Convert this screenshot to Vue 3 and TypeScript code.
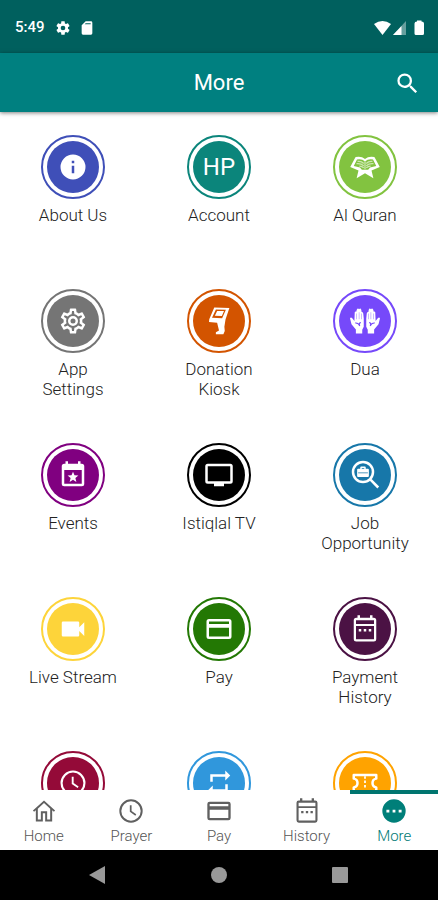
<script setup lang="ts">
import { ref } from 'vue'

interface Glyph {
  fill?: string
  stroke?: string
  fine?: string
}

interface Tile {
  label?: string
  color: string
  icon?: string
  initials?: string
}

interface Tab {
  id: string
  label: string
  icon: string
}

const COG_BODY =
  'M10,22C9.75,22 9.54,21.82 9.5,21.58L9.13,18.93C8.5,18.68 7.96,18.34 7.44,17.94L4.95,18.95C4.73,19.03 4.46,18.95 4.34,18.73L2.34,15.27C2.21,15.05 2.27,14.78 2.46,14.63L4.57,12.97L4.5,12L4.57,11L2.46,9.37C2.27,9.22 2.21,8.95 2.34,8.73L4.34,5.27C4.46,5.05 4.73,4.96 4.95,5.05L7.44,6.05C7.96,5.66 8.5,5.32 9.13,5.07L9.5,2.42C9.54,2.18 9.75,2 10,2H14C14.25,2 14.46,2.18 14.5,2.42L14.87,5.07C15.5,5.32 16.04,5.66 16.56,6.05L19.05,5.05C19.27,4.96 19.54,5.05 19.66,5.27L21.66,8.73C21.79,8.95 21.73,9.22 21.54,9.37L19.43,11L19.5,12L19.43,13L21.54,14.63C21.73,14.78 21.79,15.05 21.66,15.27L19.66,18.73C19.54,18.95 19.27,19.04 19.05,18.95L16.56,17.95C16.04,18.34 15.5,18.68 14.87,18.93L14.5,21.58C14.46,21.82 14.25,22 14,22Z'
const COG_INNER =
  'M11.25,4L10.88,6.61C9.68,6.86 8.62,7.5 7.85,8.39L5.44,7.35L4.69,8.65L6.8,10.2C6.4,11.37 6.4,12.64 6.8,13.8L4.68,15.36L5.43,16.66L7.86,15.62C8.63,16.5 9.68,17.14 10.87,17.38L11.24,20H12.76L13.13,17.39C14.32,17.14 15.37,16.5 16.14,15.62L18.57,16.66L19.32,15.36L17.2,13.81C17.6,12.64 17.6,11.37 17.2,10.2L19.31,8.65L18.56,7.35L16.15,8.39C15.38,7.5 14.32,6.86 13.12,6.62L12.75,4Z'

const glyphs: Record<string, Glyph> = {
  cog: { fill: COG_BODY + 'M12,8.5A3.5,3.5 0 0,0 12,15.5A3.5,3.5 0 0,0 12,8.5Z' },
  cogOutline: {
    fill: COG_BODY + COG_INNER + 'M12,8A4,4 0 0,1 12,16A4,4 0 0,1 12,8ZM12,10A2,2 0 0,0 12,14A2,2 0 0,0 12,10Z'
  },
  sdCard: { fill: 'M18 2H10L4 8V20A2 2 0 0 0 6 22H18A2 2 0 0 0 20 20V4A2 2 0 0 0 18 2ZM10 5H17.500V6.500H8.500Z' },
  search: {
    fill: 'M9.5,3A6.5,6.5 0 0,1 16,9.5C16,11.11 15.41,12.59 14.44,13.73L14.71,14H15.5L20.5,19L19,20.5L14,15.5V14.71L13.73,14.44C12.59,15.41 11.11,16 9.5,16A6.5,6.5 0 0,1 9.500,3ZM9.500,5A4.5,4.5 0 0,0 9.5,14A4.5,4.5 0 0,0 9.5,5Z'
  },
  info: { fill: 'M12,2A10,10 0 1,0 12,22A10,10 0 1,0 12,2ZM11,7H13V9H11ZM11,11H13V17H11Z' },
  quran: {
    fill: 'M4.500 4Q9 3 12 5.500Q15 3 19.500 4L20.200 5.200L23.800 12L17.200 14.800L18.700 21L12 17L5.300 21L6.800 14.800L.200 12L3.800 5.200ZM5.600 6L3 11.200L8 12.300L9.500 14.200H14.500L16 12.300L21 11.200L18.400 6Q14.500 5.300 12 7.500Q9.500 5.300 5.600 6Z',
    fine: 'M12 7.500V13.800M6 7.500Q9 7 11 9.200M5.200 9.300Q8.500 8.800 11 11M7.500 11.200Q9.500 11.200 11 12.600M18 7.500Q15 7 13 9.200M18.800 9.300Q15.500 8.800 13 11M16.500 11.200Q14.500 11.200 13 12.600'
  },
  kiosk: {
    fill: 'M8.200 1.200L20.300 1.500L17.200 10.700L16.300 16.500L16.600 20L15.500 22.500H9.500V21L12 19.500L10.500 13.400L4 12.700L4.200 10.500ZM9.500 2.700L6.400 9.300L14.500 9.800L17.500 2.900ZM10.500 3.900H16L14.300 7.900L8.700 7.700Z'
  },
  hands: {
    fill: 'M11 10V16.500L9.800 19V22H4.700V18.800L1.200 14.500L0 9.800Q.700 8.600 1.800 9.800L3.500 12L3.800 5Q4.300 4 5 4.600L5.400 3Q6.300 1.200 7.200 2.600Q8.400 1.300 9 3L9.300 4.800Q10.400 4.500 10.600 6ZM13 10V16.500L14.200 19V22H19.300V18.800L22.800 14.500L24 9.800Q23.300 8.600 22.200 9.800L20.500 12L20.200 5Q19.700 4 19 4.600L18.600 3Q17.700 1.200 16.800 2.600Q15.600 1.300 15 3L14.700 4.800Q13.600 4.500 13.400 6ZM4 13.200L4.300 14Q6.500 13.800 7.500 16.200L8.200 15.700Q7.200 14.200 8.800 13.300L8.500 12.700Q7.300 13 6.900 13.900Q5.800 13 4 13.200ZM20 13.200L19.700 14Q17.500 13.800 16.500 16.200L15.800 15.700Q16.800 14.200 15.200 13.300L15.500 12.700Q16.700 13 17.100 13.900Q18.200 13 20 13.200ZM5.300 6H5.600V10.500H5.300ZM7.100 5H7.400V10.500H7.100ZM9 6H9.300V10.500H9ZM18.400 6H18.700V10.500H18.400ZM16.600 5H16.900V10.500H16.600ZM14.700 6H15V10.500H14.700Z'
  },
  calendarStar: {
    fill: 'M6 1H8V3H16V1H18V3H19A2 2 0 0 1 21 5V19A2 2 0 0 1 19 21H5A2 2 0 0 1 3 19V5A2 2 0 0 1 5 3H6ZM5 8V19H19V8ZM12 9.300L13.200 12.200L16.300 12.400L13.900 14.400L14.700 17.500L12 15.800L9.300 17.500L10.100 14.400L7.700 12.400L10.800 12.200Z'
  },
  tv: {
    fill: 'M3 3H21A2 2 0 0 1 23 5V17A2 2 0 0 1 21 19H16V21H8V19H3A2 2 0 0 1 1 17V5A2 2 0 0 1 3 3ZM3 5V17H21V5Z'
  },
  jobSearch: {
    fill: 'M6.500 7H8.200V6Q8.200 5.200 9 5.200H11.800Q12.600 5.200 12.600 6V7H14.300Q15.100 7 15.100 7.800V12.700Q15.100 13.500 14.300 13.500H6.500Q5.700 13.500 5.700 12.700V7.800Q5.700 7 6.500 7ZM9.400 6.300V7H11.400V6.300ZM6.500 10V10.500H14.300V10Z',
    stroke: 'M10.400 1.600A8 8 0 1 1 10.400 17.600A8 8 0 1 1 10.400 1.600ZM16.200 15.500L22.600 22'
  },
  video: { fill: 'M17,10.5V7A1,1 0 0,0 16,6H4A1,1 0 0,0 3,7V17A1,1 0 0,0 4,18H16A1,1 0 0,0 17,17V13.5L21,17.5V6.5L17,10.5Z' },
  card: {
    fill: 'M4 4H20A2 2 0 0 1 22 6V18A2 2 0 0 1 20 20H4A2 2 0 0 1 2 18V6A2 2 0 0 1 4 4ZM4 6V8H20V6ZM4 11V18H20V11Z'
  },
  calendar: {
    fill: 'M6 1H8V3H16V1H18V3H19A2 2 0 0 1 21 5V20A2 2 0 0 1 19 22H5A2 2 0 0 1 3 20V5A2 2 0 0 1 5 3H6ZM4.800 5V8H19.200V5ZM4.800 9.500V20.200H19.200V9.500ZM7 12H9V14H7ZM11 12H13V14H11ZM15 12H17V14H15Z'
  },
  clock: {
    fill: 'M12 2A10 10 0 1 0 12 22A10 10 0 1 0 12 2ZM12 3.700A8.300 8.300 0 1 1 12 20.300A8.300 8.300 0 1 1 12 3.700ZM11 7H12.500V12L16.500 14.800L15.700 16L11 12.700Z'
  },
  repeat: { fill: 'M17,17H7V14L3,18L7,22V19H19V13H17ZM7,7H17V10L21,6L17,2V5H5V11H7Z' },
  ticket: {
    fill: 'M11.300 6.500H12.700V8.500H11.300ZM11.300 10H12.700V12H11.300ZM11.300 13.500H12.700V15.500H11.300Z',
    stroke: 'M3 5.500H21V8.500Q18 9 18 12Q18 15 21 15.500V18.500H3V15.500Q6 15 6 12Q6 9 3 8.500Z'
  },
  home: { fill: 'M12 3L2.500 11.600L3.500 12.700L5 11.300V21H11V14H13V21H19V11.300L20.500 12.700L21.500 11.600ZM12 5.200L17.300 10V19.300H14.700V12.300H9.300V19.300H6.700V10Z' },
  more: { fill: 'M12 2A10 10 0 1 0 12 22A10 10 0 1 0 12 2ZM5.500 11H8V13.200H5.500ZM10.800 11H13.200V13.200H10.800ZM16 11H18.500V13.200H16Z' }
}

const tiles: Tile[] = [
  { label: 'About Us', color: '#3f4fb8', icon: 'info' },
  { label: 'Account', color: '#0b857b', initials: 'HP' },
  { label: 'Al Quran', color: '#82c340', icon: 'quran' },
  { label: 'App Settings', color: '#757575', icon: 'cogOutline' },
  { label: 'Donation Kiosk', color: '#d35400', icon: 'kiosk' },
  { label: 'Dua', color: '#7649fa', icon: 'hands' },
  { label: 'Events', color: '#800080', icon: 'calendarStar' },
  { label: 'Istiqlal TV', color: '#000000', icon: 'tv' },
  { label: 'Job Opportunity', color: '#1777a9', icon: 'jobSearch' },
  { label: 'Live Stream', color: '#fdd43a', icon: 'video' },
  { label: 'Pay', color: '#237804', icon: 'card' },
  { label: 'Payment History', color: '#4b1244', icon: 'calendar' },
  { color: '#940a38', icon: 'clock' },
  { color: '#3097dc', icon: 'repeat' },
  { color: '#ffa300', icon: 'ticket' }
]

const tabs: Tab[] = [
  { id: 'home', label: 'Home', icon: 'home' },
  { id: 'prayer', label: 'Prayer', icon: 'clock' },
  { id: 'pay', label: 'Pay', icon: 'card' },
  { id: 'history', label: 'History', icon: 'calendar' },
  { id: 'more', label: 'More', icon: 'more' }
]

const activeTab = ref('more')
</script>

<template>
  <div class="app">
    <div class="status">
      <div class="status-group">
        <span class="time">5:49</span>
        <svg class="status-icon" viewBox="0 0 24 24"><path :d="glyphs.cog.fill" /></svg>
        <svg class="status-icon" viewBox="0 0 24 24"><path :d="glyphs.sdCard.fill" /></svg>
      </div>
      <svg class="signals" viewBox="0 0 52 16">
        <path d="M0 4Q8.500-2 17 4L8.500 15Z" />
        <path d="M32 1V15H19Z" opacity="0.4" />
        <path d="M27.500 6V15H19Z" />
        <path d="M43 1.500V0.500H47.500V1.500Q50 1.500 50 3.500V13.500Q50 15 48.500 15H42Q40.500 15 40.500 13.500V3.500Q40.500 1.500 43 1.500Z" />
      </svg>
    </div>

    <header class="bar">
      <h1 class="title">More</h1>
      <button class="search" type="button" aria-label="Search">
        <svg viewBox="0 0 24 24"><path :d="glyphs.search.fill" /></svg>
      </button>
    </header>

    <main class="content">
      <div class="grid">
        <button v-for="tile in tiles" :key="tile.color" class="tile" type="button">
          <span class="badge" :style="{ color: tile.color }">
            <span class="disc">
              <span v-if="tile.initials" class="initials">{{ tile.initials }}</span>
              <svg v-else-if="tile.icon" class="glyph" viewBox="0 0 24 24">
                <path v-if="glyphs[tile.icon].fill" :d="glyphs[tile.icon].fill" />
                <path v-if="glyphs[tile.icon].stroke" class="line" :d="glyphs[tile.icon].stroke" />
                <path v-if="glyphs[tile.icon].fine" class="line fine" :d="glyphs[tile.icon].fine" />
              </svg>
            </span>
          </span>
          <span v-if="tile.label" class="label">{{ tile.label }}</span>
        </button>
      </div>
    </main>

    <nav class="tabs">
      <a
        v-for="tab in tabs"
        :key="tab.id"
        :href="'#' + tab.id"
        class="tab"
        :class="{ active: tab.id === activeTab }"
        @click.prevent="activeTab = tab.id"
      >
        <svg class="tab-icon" viewBox="0 0 24 24"><path :d="glyphs[tab.icon].fill" /></svg>
        <span>{{ tab.label }}</span>
      </a>
    </nav>

    <div class="system">
      <button type="button" aria-label="Back">
        <svg viewBox="0 0 20 20"><path d="M1 10L17 1V19Z" /></svg>
      </button>
      <button type="button" aria-label="Home screen">
        <svg viewBox="0 0 20 20"><circle cx="10" cy="10" r="8" /></svg>
      </button>
      <button type="button" aria-label="Recent apps">
        <svg viewBox="0 0 20 20"><rect x="2" y="2" width="16" height="16" rx="1" /></svg>
      </button>
    </div>
  </div>
</template>

<style>
body {
  background: #fff;
}
</style>

<style scoped>
.app {
  display: flex;
  flex-direction: column;
  height: 100vh;
  overflow: hidden;
  font-family: Roboto, "Liberation Sans", sans-serif;
  color: #222;
}

button {
  padding: 0;
  border: 0;
  background: none;
  font: inherit;
  color: inherit;
  cursor: pointer;
}

svg {
  display: block;
  fill: currentColor;
  fill-rule: evenodd;
}

.status {
  display: flex;
  flex-shrink: 0;
  align-items: center;
  justify-content: space-between;
  padding: 17px 12px 15px 15px;
  line-height: 21px;
  background: #00605e;
  color: #fff;
}

.status-group {
  display: flex;
  align-items: center;
  gap: 8px;
}

.time {
  margin-right: 2px;
  font-size: 15px;
  font-weight: 500;
}

.status-icon {
  width: 16px;
  height: 16px;
}

.signals {
  width: 52px;
  height: 16px;
}

.bar {
  position: relative;
  z-index: 1;
  display: grid;
  grid-template-columns: 1fr auto 1fr;
  flex-shrink: 0;
  align-items: center;
  padding: 16px 17px 15px;
  background: #008080;
  color: #fff;
  box-shadow: 0 1px 4px rgba(0, 0, 0, 0.5);
}

.title {
  grid-column: 2;
  margin: 0;
  font-size: 22px;
  font-weight: 400;
  line-height: 28px;
}

.search {
  justify-self: end;
}

.search svg {
  width: 27px;
  height: 27px;
}

.content {
  flex: 1;
  min-height: 0;
  overflow: hidden;
}

.grid {
  display: grid;
  grid-template-columns: repeat(3, 1fr);
  grid-auto-rows: 154px;
  padding-top: 23px;
}

.tile {
  display: flex;
  flex-direction: column;
  align-items: center;
  gap: 6px;
  padding: 0 27px;
}

.badge {
  flex-shrink: 0;
  box-sizing: border-box;
  width: 64px;
  height: 64px;
  padding: 4px;
  border: 2px solid currentColor;
  border-radius: 50%;
}

.disc {
  display: flex;
  align-items: center;
  justify-content: center;
  height: 100%;
  border-radius: 50%;
  background: currentColor;
}

.initials {
  font-size: 24px;
  line-height: 28px;
  color: #fff;
}

.glyph {
  width: 30px;
  height: 30px;
  overflow: visible;
  color: #fff;
}

.line {
  fill: none;
  stroke: currentColor;
  stroke-width: 2;
  stroke-linejoin: round;
}

.fine {
  stroke-width: 1;
  opacity: 0.6;
}

.label {
  font-size: 17px;
  font-weight: 300;
  line-height: 20px;
  text-align: center;
}

.tabs {
  display: grid;
  grid-template-columns: repeat(5, 1fr);
  flex-shrink: 0;
  background: #fff;
}

.tab {
  display: flex;
  flex-direction: column;
  align-items: center;
  padding-bottom: 5px;
  border-top: 4px solid transparent;
  font-size: 15px;
  font-weight: 300;
  line-height: 18px;
  color: #555;
  text-decoration: none;
}

.tab-icon {
  width: 28px;
  height: 28px;
  margin: 3px 0 2px;
  color: #606060;
}

.tab.active {
  border-top-color: #00756f;
  color: #007a75;
}

.tab.active .tab-icon {
  color: #007f79;
}

.system {
  display: flex;
  flex-shrink: 0;
  align-items: center;
  justify-content: center;
  gap: 101px;
  padding: 15px 0;
  background: #000;
  color: #999;
}

.system svg {
  width: 20px;
  height: 20px;
}
</style>
